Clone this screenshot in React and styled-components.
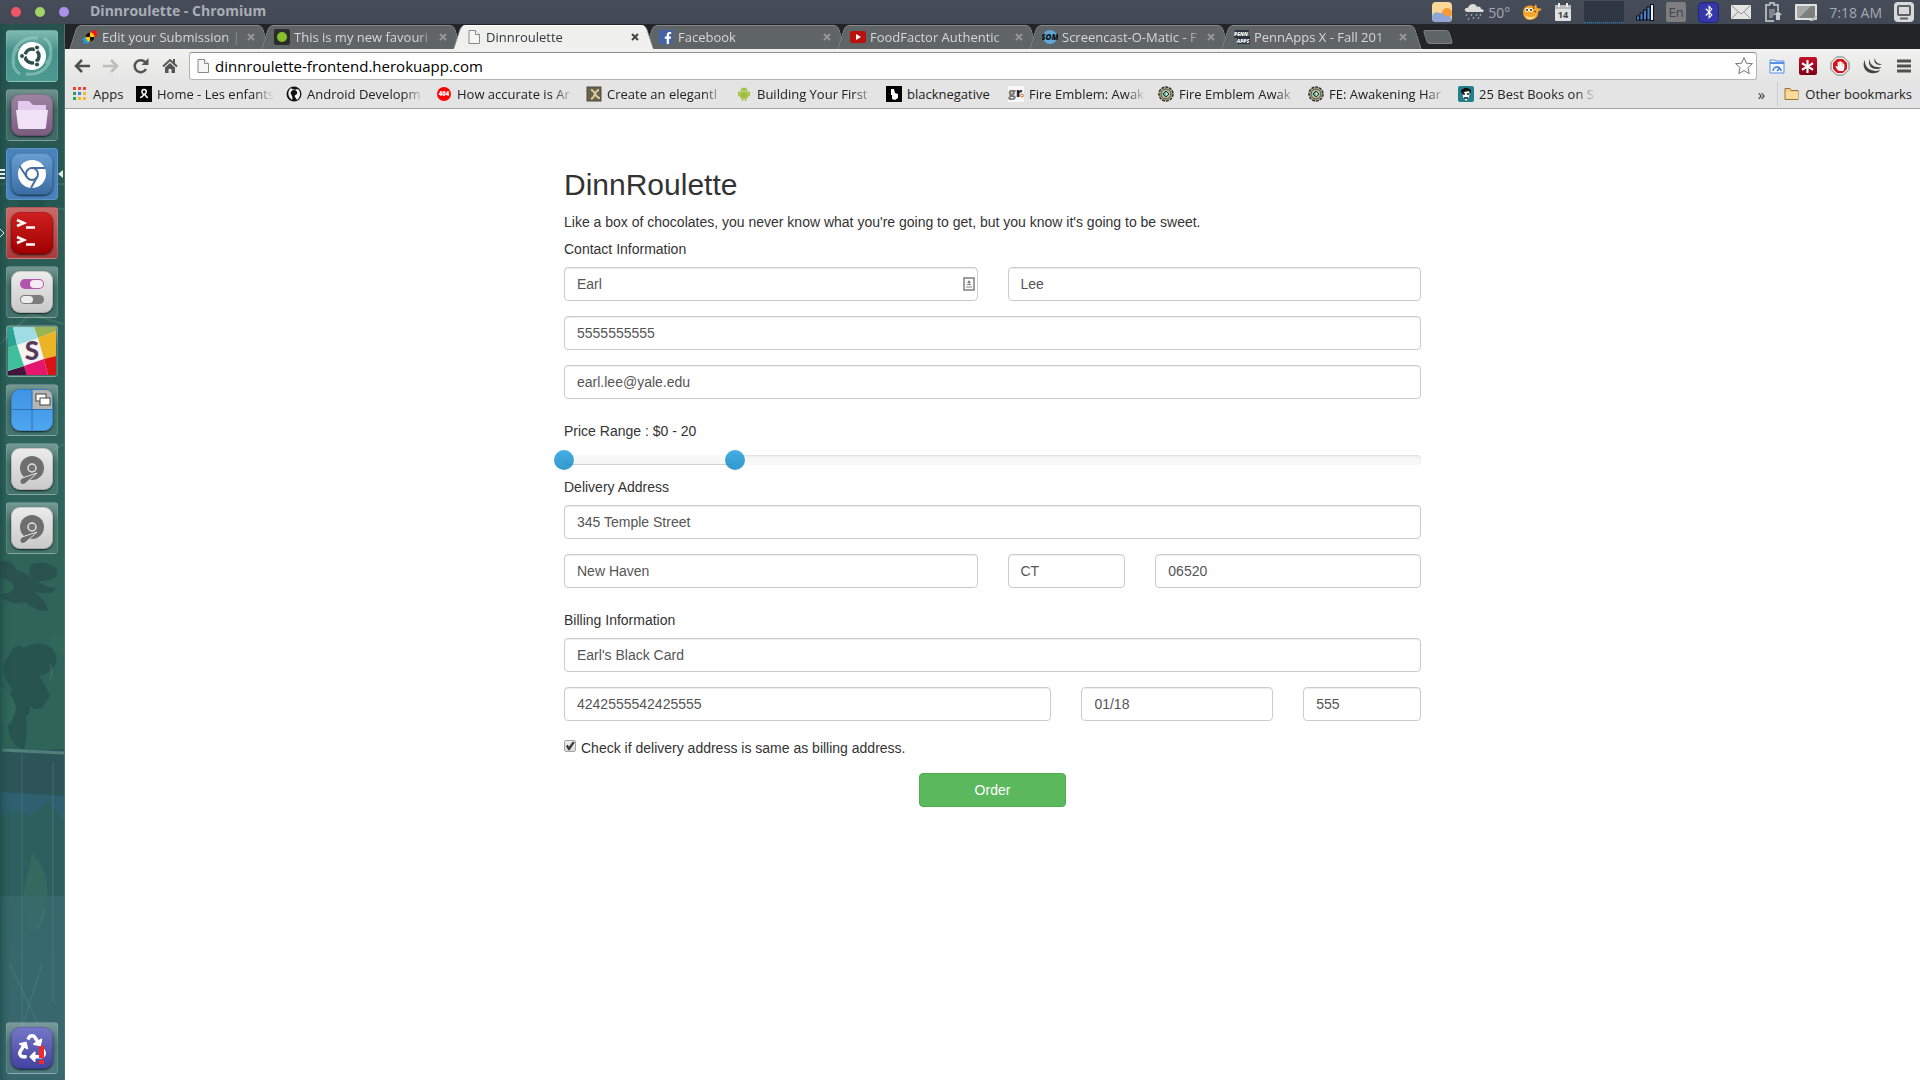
import React, { useState } from 'react';
import styled, { createGlobalStyle, css } from 'styled-components';
import { AiFillAndroid } from 'react-icons/ai';
import { FaAsterisk, FaBluetoothB, FaFacebookF, FaHandPaper, FaRecycle } from 'react-icons/fa';

const uiFont = '"Open Sans", "Noto Sans", sans-serif';
const pageFont = '"Liberation Sans", Arial, sans-serif';

/* ---------- favicons ---------- */

const PageIcon = () => (
  <svg width="16" height="16" viewBox="0 0 16 16">
    <path d="M3 1.5h6.5l4 4v9H3z" fill="#f6f6f6" stroke="#8a8a8a" />
    <path d="M9.5 1.5v4h4" fill="#fff" stroke="#8a8a8a" />
  </svg>
);

const PinwheelIcon = () => (
  <svg width="16" height="16" viewBox="0 0 16 16">
    <path d="M8 5l2-4 2 1 3-1-1 3 2 2-4 2z" fill="#f01414" />
    <path d="M8 11l-2 4-2-1-3 1 1-3-2-2 4-2z" fill="#1c9be0" />
    <circle cx="8" cy="8" r="4.5" fill="#ffc60a" />
    <path d="M8 8V3.5A4.5 4.5 0 0 0 3.5 8zM8 8v4.5A4.5 4.5 0 0 0 12.500 8z" fill="#111" />
  </svg>
);

const GreenDotIcon = () => (
  <svg width="16" height="16" viewBox="0 0 16 16">
    <rect width="16" height="16" rx="2" fill="#2b2d2b" />
    <circle cx="8" cy="8" r="5" fill="#86bf2e" />
  </svg>
);

const FacebookBox = styled.span`
  display: flex;
  align-items: flex-end;
  justify-content: center;
  width: 14px;
  height: 14px;
  margin: 0 1px;
  padding-left: 3px;
  background: #4561a8;
  color: #fff;
`;

const FacebookIcon = () => <FacebookBox><FaFacebookF size={12} /></FacebookBox>;

const YoutubeIcon = () => (
  <svg width="16" height="16" viewBox="0 0 16 16">
    <rect y="2" width="16" height="12" rx="2" fill="#b9110c" />
    <path d="M6 5l5 3-5 3z" fill="#fff" />
  </svg>
);

const SomIcon = () => (
  <svg width="16" height="16" viewBox="0 0 16 16">
    <circle cx="8" cy="8" r="7" fill="#5fa5d6" />
    <text x="8" y="11" textAnchor="middle" fontFamily="Open Sans" fontStyle="italic" fontWeight="800" fontSize="8" fill="#111">SOM</text>
  </svg>
);

const PennIcon = () => (
  <svg width="16" height="16" viewBox="0 0 16 16">
    <path d="M1 1h14l-1 6h2v8H3V9H0z" fill="#2e3440" />
    <text x="7" y="7" textAnchor="middle" fontFamily="Open Sans" fontStyle="italic" fontWeight="800" fontSize="5" fill="#fff">PENN</text>
    <text x="9" y="14" textAnchor="middle" fontFamily="Open Sans" fontStyle="italic" fontWeight="800" fontSize="5" fill="#fff">APPS</text>
  </svg>
);

const AppsIcon = () => (
  <svg width="15" height="14" viewBox="0 0 15 14">
    {['#e8453c', '#e8453c', '#e8453c', '#2f9e58', '#3c7fe8', '#f5b720', '#2f9e58', '#f5b720', '#f5b720'].map((c, i) => (
      <rect key={i} x={(i % 3) * 5} y={Math.floor(i / 3) * 5} width="3" height="3" fill={c} />
    ))}
  </svg>
);

const EnfantsIcon = () => (
  <svg width="16" height="16" viewBox="0 0 16 16">
    <rect width="16" height="16" fill="#000" />
    <path d="M4 11.5c3 0 3-2 4-3C5.500 8 5 3.5 8 3.5s3 4 0 5c2 0 2 3 4 3" fill="none" stroke="#fff" strokeWidth="1.5" />
  </svg>
);

const GithubIcon = () => (
  <svg width="16" height="16" viewBox="0 0 16 16">
    <circle cx="8" cy="8" r="7.5" fill="#111" />
    <path d="M5 2C2 4 1.5 9 4 12l2 2c1-2 0-4-1-6s1-4 3-4 4 2 3 4c-1 1-3 1-2 3l2 3c4-3 4-8 1-11-1 1-6 1-7-1z" fill="#f4f4f4" />
  </svg>
);

const NotFoundIcon = () => (
  <svg width="16" height="16" viewBox="0 0 16 16">
    <circle cx="8" cy="8" r="7" fill="#f00" />
    <text x="8" y="10" textAnchor="middle" fontFamily="Open Sans" fontWeight="800" fontSize="6" fill="#fff">404</text>
  </svg>
);

const XIcon = () => (
  <svg width="16" height="16" viewBox="0 0 16 16">
    <rect x="1" y="1" width="14" height="14" fill="#67624f" stroke="#4f4b3c" />
    <path d="M5 4c4 0 4 8 9 8M13 4c-4 0-4 8-8 9" fill="none" stroke="#dccb94" strokeWidth="2" />
  </svg>
);

const BlackIcon = () => (
  <svg width="16" height="16" viewBox="0 0 16 16">
    <rect width="16" height="16" fill="#000" />
    <path d="M5 3h3l1 4 3 1v4l-3 2-3-1V9H5z" fill="#fff" />
  </svg>
);

const GrIcon = () => (
  <svg width="16" height="16" viewBox="0 0 16 16">
    <rect width="16" height="16" fill="#f7f7f7" />
    <text x="0" y="11" fontFamily="Open Sans" fontWeight="800" fontSize="13" fill="#777">g</text>
    <text x="8" y="11" fontFamily="Open Sans" fontWeight="800" fontSize="13" fill="#222">r</text>
    <circle cx="14" cy="9.5" r="1.5" fill="none" stroke="#f26522" />
  </svg>
);

const EmblemIcon = () => (
  <svg width="16" height="16" viewBox="0 0 16 16">
    <circle cx="8" cy="8" r="7" fill="#b9b79a" stroke="#2d3129" strokeWidth="1.5" strokeDasharray="3 1" />
    <circle cx="8" cy="8" r="5" fill="none" stroke="#45493d" />
    <path d="M8 5l3 3-3 3-3-3z" fill="#4fb8a4" stroke="#2d3129" />
    <path d="M8 6l2 2-2 2z" fill="#d6f3ea" />
  </svg>
);

const BookIcon = () => (
  <svg width="16" height="16" viewBox="0 0 16 16">
    <rect width="16" height="16" rx="2" fill="#21808c" />
    <path d="M4 4c2-3 7-3 8 0l-1 7-3 4-3-4z" fill="#fff" />
    <path d="M3 6c0-5 9-6 10-1l-1 3-1-3-5 1-1 3z" fill="#111" />
    <path d="M5 8h2M9 8h2M6 12h4" stroke="#111" strokeWidth="1.5" />
  </svg>
);

const FolderIcon = () => (
  <svg width="16" height="16" viewBox="0 0 16 16">
    <path d="M1 13.500v-11h5l1 2h7v9z" fill="#f4cf8a" stroke="#9b7430" />
    <path d="M2 6h12v7H2z" fill="#fbdc9e" />
  </svg>
);

/* ---------- top panel icons ---------- */

const WeatherIcon = () => (
  <svg width="20" height="20" viewBox="0 0 20 20">
    <rect width="20" height="20" rx="4" fill="#f9d89a" />
    <circle cx="15" cy="11" r="5" fill="#f59a35" />
    <path d="M0 15c0-4 4-6 7-4 4-1 6 2 6 3 4-1 6 1 7 3-1 2-2 3-4 3H4c-2 0-4-1-4-5z" fill="#8fa6d6" />
  </svg>
);

const RainIcon = () => (
  <svg width="20" height="18" viewBox="0 0 20 18">
    <path d="M3 9C-1 8 1 4 4 5c1-5 8-5 9-1 2-1 4 0 4 2 4 0 3 4 0 3z" fill="#dcdcd8" />
    <path d="M3 11l-1 2M8 11l-1 2M13 11l-1 2M17 11l-1 2M5 15l-1 2M10 14l-1 2M15 14l-1 2" stroke="#b4bcc6" />
  </svg>
);

const FishIcon = () => (
  <svg width="20" height="18" viewBox="0 0 20 18">
    <path d="M1 9C1 3 8 1 12 4l2-3 1 4 5 1-4 3c1 5-4 8-8 8s-7-3-7-8z" fill="#f3a52c" />
    <path d="M3 12c3 3 8 3 11 0-2 5-9 6-11 0z" fill="#ffe29a" />
    <circle cx="5" cy="7" r="2" fill="#fff" />
    <circle cx="9" cy="7" r="2" fill="#fff" />
    <circle cx="5" cy="7" r="1" fill="#222" />
    <circle cx="9" cy="7" r="1" fill="#222" />
    <path d="M12 8l2 1M11 4l1 2" stroke="#6d3c08" />
  </svg>
);

const CalendarIcon = () => (
  <svg width="18" height="18" viewBox="1 0 18 18">
    <rect x="2" y="2" width="16" height="16" rx="1" fill="#dfdfdf" />
    <rect x="2" y="2" width="16" height="4" fill="#b9b9b9" />
    <path d="M6 0v4M14 0v4" stroke="#eee" strokeWidth="2" />
    <text x="10" y="15" textAnchor="middle" fontFamily="Open Sans" fontWeight="700" fontSize="9" fill="#3c414b">14</text>
  </svg>
);

const GraphBox = styled.div`
  width: 40px;
  height: 22px;
  background: #2f3742;
  border-bottom: 1px dotted #2089d6;
`;

const SignalIcon = () => (
  <svg width="18" height="17" viewBox="0 0 18 17">
    {[0, 1, 2, 3].map((n) => (
      <rect key={n} x={n * 3.5 + 0.5} y={12 - n * 3} width="3" height={4 + n * 3} fill="#4a7fd0" stroke="#0d1117" />
    ))}
    <rect x="14.5" y="0.5" width="3" height="16" fill="#f2f2f2" stroke="#0d1117" />
  </svg>
);

const LanguageBox = styled.span`
  width: 20px;
  height: 20px;
  border-radius: 2px;
  background: #7e7e7e;
  color: #40454f;
  font-size: 13px;
  line-height: 20px;
  text-align: center;
`;

const BluetoothBox = styled.span`
  display: flex;
  align-items: center;
  justify-content: center;
  width: 21px;
  height: 21px;
  border-radius: 5px;
  background: #3438a8;
  box-shadow: inset 0 0 0 1px #22257c;
  color: #fff;
`;

const MailIcon = () => (
  <svg width="20" height="14" viewBox="0 0 20 14">
    <rect width="20" height="14" rx="1" fill="#e4e4e2" />
    <path d="M1 1l9 8 9-8M1 13l6-6M19 13l-6-6" fill="none" stroke="#8f8f8d" />
  </svg>
);

const BatteryIcon = () => (
  <svg width="20" height="20" viewBox="0 0 20 20">
    <path d="M7 3V1h4v2h4v6M11 19H3V3h4" fill="none" stroke="#aeb1b6" strokeWidth="2" />
    <path d="M6 7h6v5l-3 4H6z" fill="#7f848d" />
    <path d="M11 13l4-4 4 4h-2v5h-4v-5z" fill="#c9cbce" />
  </svg>
);

const ScreenIcon = () => (
  <svg width="22" height="17" viewBox="0 0 22 17">
    <rect width="22" height="16" rx="1" fill="#e2e2de" />
    <rect x="2" y="2" width="18" height="12" fill="#7c7f7b" />
    <path d="M2 2h14L4 14H2z" fill="#a5a8a4" />
    <path d="M14 17l8-6v2l-4 4z" fill="#b9bcae" />
  </svg>
);

const SessionIcon = () => (
  <svg width="20" height="20" viewBox="0 0 20 20">
    <rect width="20" height="20" rx="4" fill="#d9d9d9" />
    <rect x="4" y="4" width="12" height="9" rx="1" fill="none" stroke="#5c5f63" strokeWidth="2" />
    <path d="M6 16.500h8" stroke="#5c5f63" strokeWidth="2" />
  </svg>
);

/* ---------- toolbar icons ---------- */

const ArrowIcon = ({ forward }) => (
  <svg width="16" height="14" viewBox="0 0 16 14">
    <path
      d={forward ? 'M0 7h13M8 1l6 6-6 6' : 'M16 7H3M8 1L2 7l6 6'}
      fill="none"
      stroke={forward ? '#bdbdbd' : '#505050'}
      strokeWidth="2.5"
    />
  </svg>
);

const ReloadIcon = () => (
  <svg width="16" height="16" viewBox="0 0 16 16">
    <path d="M13 11a6 6 0 1 1-.5-6.500" fill="none" stroke="#555" strokeWidth="2.5" />
    <path d="M15.500 0v7h-7z" fill="#555" />
  </svg>
);

const HomeIcon = () => (
  <svg width="16" height="16" viewBox="0 0 16 16">
    <path d="M1 8.500L8 2l7 6.500" fill="none" stroke="#555" strokeWidth="2" />
    <path d="M8 5l5 4.500V15H9.500v-4h-3v4H3V9.500z" fill="#555" />
    <path d="M11 1h2v4h-2z" fill="#555" />
  </svg>
);

const StarIcon = () => (
  <svg width="20" height="20" viewBox="0 0 20 20">
    <path d="M10 1.500l2.400 5.700 6.100.5-4.600 4 1.400 6-5.300-3.200-5.300 3.200 1.400-6-4.600-4 6.100-.5z" fill="#fff" stroke="#777" />
  </svg>
);

const SpeedIcon = () => (
  <svg width="16" height="16" viewBox="0 0 16 16">
    <path d="M1 2h5l1 1h8v12H1z" fill="#f4f8ff" stroke="#5a8fe6" />
    <path d="M1 5h14" stroke="#5a8fe6" strokeWidth="2" />
    <path d="M4 13a4 4 0 0 1 8 0M8 13l3-3" fill="none" stroke="#3d78d8" strokeWidth="1.5" />
  </svg>
);

const LastPassBox = styled.span`
  display: flex;
  align-items: center;
  justify-content: center;
  width: 18px;
  height: 18px;
  border-radius: 2px;
  background: linear-gradient(#c5102c, #7e0014);
  color: #fff;
`;

const StopSign = styled.span`
  display: grid;
  place-items: center;
  color: #fff;

  > * {
    grid-area: 1 / 1;
  }
`;

const StopIcon = () => (
  <StopSign>
    <svg width="20" height="20" viewBox="0 0 20 20">
      <path d="M6.500 1h7L19 6.500v7L13.500 19h-7L1 13.500v-7z" fill="#f4f4f4" stroke="#777" />
      <path d="M7 3h6l4 4v6l-4 4H7l-4-4V7z" fill="#d8121a" />
    </svg>
    <FaHandPaper size={10} />
  </StopSign>
);

const SwooshIcon = () => (
  <svg width="20" height="18" viewBox="0 0 20 18">
    <path d="M3 3C-1 9 4 18 13 16c2 0 4-1 5-3C10 16 2 11 3 3z" fill="#444" />
    <path d="M8 2c-3 5 1 11 8 10 1 0 3-1 3-2-6 1-12-2-11-8z" fill="#444" />
    <path d="M13 1c-2 4 1 7 5 7l2-1c-4 0-7-2-7-6z" fill="#444" />
  </svg>
);

const MenuIcon = () => (
  <svg width="14" height="14" viewBox="0 0 14 14">
    <path d="M0 2h14M0 7h14M0 12h14" stroke="#505050" strokeWidth="3" />
  </svg>
);

/* ---------- launcher icons ---------- */

const UbuntuIcon = () => (
  <svg width="50" height="50" viewBox="1 1 50 50">
    <path d="M8 34C4 18 16 6 32 8M44 18c4 16-8 28-24 26M14 44C4 38 6 24 12 18M38 8c10 6 8 20 2 26" fill="none" stroke="#a9d6cf" strokeWidth="3" opacity=".5" />
    <circle cx="26" cy="26" r="14" fill="#fff" />
    <circle cx="26" cy="26" r="7" fill="none" stroke="#2f4f4e" strokeWidth="3.5" strokeDasharray="12.700 2" strokeDashoffset="6" />
    <circle cx="16" cy="26" r="2.5" fill="#2f4f4e" stroke="#fff" />
    <circle cx="31" cy="17.5" r="2.5" fill="#2f4f4e" stroke="#fff" />
    <circle cx="31" cy="34.5" r="2.5" fill="#2f4f4e" stroke="#fff" />
  </svg>
);

const FilesIcon = () => (
  <svg width="42" height="42" viewBox="0 0 42 42">
    <path d="M7 7h11l4 4h13v10H7z" fill="#e4c9ee" />
    <path d="M5 16h32l-2 17q0 2-2 2H9q-2 0-2-2z" fill="#f1e1f7" />
  </svg>
);

const ChromiumIcon = () => (
  <svg width="42" height="42" viewBox="0 0 42 42">
    <circle cx="21" cy="21" r="14" fill="#fff" />
    <circle cx="21" cy="21" r="6" fill="#fff" stroke="#466f9f" strokeWidth="2" />
    <path d="M21 15h13M15.800 24L8.500 13M26 24l-6 11" stroke="#466f9f" strokeWidth="2" />
  </svg>
);

const TerminalIcon = () => (
  <svg width="42" height="42" viewBox="0 0 42 42">
    <path d="M6 8l7 3-7 3M6 25l7 3-7 3" fill="none" stroke="#fff" strokeWidth="2.5" />
    <path d="M15 15.500h9M15 32.500h9" stroke="#fff" strokeWidth="2.5" />
  </svg>
);

const TogglesIcon = () => (
  <svg width="42" height="42" viewBox="0 0 42 42">
    <rect x="9" y="8" width="24" height="10" rx="5" fill="#b355ae" />
    <rect x="19" y="9" width="13" height="8" rx="4" fill="#f6ecf6" />
    <rect x="9" y="24" width="24" height="9" rx="4.5" fill="#7c7c7c" />
    <rect x="10" y="25" width="12" height="7" rx="3.5" fill="#ececec" />
  </svg>
);

const SlackIcon = () => (
  <svg width="48" height="48" viewBox="0 0 48 48">
    <path d="M0 0h48v48H0z" fill="#f6f2f4" />
    <path d="M0 0h5l4 18-9 3z" fill="#2aa591" />
    <path d="M5 0h21l4 11L9 18z" fill="#9fdce4" />
    <path d="M26 0h22v4l-18 7z" fill="#98b453" />
    <path d="M30 11l18-7v25l-12 3z" fill="#ecb424" />
    <path d="M36 32l12-3v19h-8z" fill="#d81414" />
    <path d="M36 32l-20 7 3 9h21z" fill="#e6166e" />
    <path d="M16 39L0 44v4h19z" fill="#44143f" />
    <path d="M9 18l7 21-16 5V21z" fill="#3fc09b" />
    <text x="24" y="33" textAnchor="middle" fontFamily="Lato" fontWeight="900" fontSize="26" fill="#573a56">S</text>
  </svg>
);

const WorkspaceIcon = () => (
  <svg width="42" height="42" viewBox="0 0 42 42">
    <path d="M21 1h14q6 0 6 6v14H21z" fill="#b5b5b5" />
    <path d="M21 1v40M1 20.500h40" stroke="#2b6fb8" />
    <rect x="25" y="5" width="10" height="7" fill="#fff" stroke="#444" />
    <rect x="29" y="9" width="10" height="7" fill="#fff" stroke="#444" />
  </svg>
);

const DiskIcon = () => (
  <svg width="42" height="42" viewBox="0 0 42 42">
    <circle cx="21" cy="20" r="12" fill="#6e6e6e" />
    <circle cx="21" cy="20" r="4" fill="#747474" stroke="#e2e2e2" strokeWidth="1.5" />
    <path d="M26 25L14 36q-3 2-5-1-1-3 2-5z" fill="#6e6e6e" stroke="#e2e2e2" />
  </svg>
);

const BangIcon = () => (
  <svg width="5" height="18" viewBox="0 0 5 18">
    <path d="M0 0h5v12H0zM0 14h5v4H0z" fill="#f02a2a" />
  </svg>
);

const Wallpaper = () => (
  <svg width="64" height="1056" viewBox="0 0 64 1056" preserveAspectRatio="none">
    <rect y="500" width="64" height="230" fill="#2f6459" />
    <path d="M0 130q20-20 64-5v60q-30 20-64 0z" fill="#265852" />
    <path d="M20 150h20l6 40H18z" fill="#22524b" />
    <path d="M0 160h64M4 185h60M0 320l30-30 34 10M30 440l34-20" fill="none" stroke="#4f8a7e" strokeWidth="2" opacity=".4" />
    <path d="M0 538q12-4 16 8 10 2 16 10-6-8 0-16 14-4 24 4 4 10-8 12-8 2-12 0 10 8 20 8-2 8-22 4 12 8 14 18-6 4-24-8-10 4-18-2-6-2-6-6 14 0 14-8-6-8-14-8z" fill="#2a524e" />
    <path d="M12 626q6-8 12-2 16-10 30 2 6 14-4 20-8 8-12 4 6 8 12 22l-8 12q-12 4-12-6 2 12-4 14 2 18-2 34-14-4-16-24 8-8 6-22-6-8-2-16-10-10-8-24z" fill="#28544f" />
    <path d="M50 616q6-6 14-2v18l-10-4zM0 664q14 6 16 20-2 16-16 18z" fill="#30685a" />
    <path d="M0 728l64-3v50H0z" fill="#2d5559" />
    <path d="M2 726l62 3" stroke="#6d9c93" strokeWidth="3" opacity=".6" />
    <path d="M0 768l64 4v100H0z" fill="#2f6070" />
    <path d="M0 792q20-8 30 0l18-14 16 18v76H0z" fill="#2d5f5e" />
    <path d="M32 830q20 20 14 50-8 30-18 28-8-30-2-50z" fill="#35695f" />
    <path d="M0 872h64v184H0z" fill="#3a6c73" opacity=".5" />
    <path d="M22 730v290M53 738v240M10 940l28 60M42 940L20 1010M44 885q-2 16-8 20M50 640q4 8 0 16" fill="none" stroke="#5d938b" opacity=".4" />
  </svg>
);

/* ---------- layout ---------- */

const GlobalStyle = createGlobalStyle`
  * {
    box-sizing: border-box;
  }
  body {
    margin: 0;
    background: #fff;
  }
  svg {
    display: block;
    flex-shrink: 0;
  }
`;

const Desktop = styled.div`
  display: flex;
  flex-direction: column;
  min-height: 100vh;
  font-family: ${uiFont};
`;

const TopPanel = styled.header`
  display: flex;
  align-items: center;
  height: 24px;
  padding: 0 6px 0 11px;
  background: linear-gradient(#474d58, #434954);
`;

const WindowButton = styled.button`
  width: 10px;
  height: 10px;
  margin-right: 14px;
  padding: 0;
  border: none;
  border-radius: 50%;
  background: ${({ $color }) => $color};
`;

const WindowTitle = styled.span`
  margin-left: 7px;
  color: #a9afb9;
  font-size: 14px;
  font-weight: 700;
  line-height: 22px;
  height: 24px;
`;

const Indicators = styled.div`
  display: flex;
  align-items: center;
  gap: 12px;
  margin-left: auto;
  color: #a2a9b4;
  font-size: 14px;
`;

const Temperature = styled.span`
  display: flex;
  align-items: center;
  gap: 4px;
`;

const Workspace = styled.div`
  display: flex;
  flex: 1;
`;

const Launcher = styled.nav`
  position: relative;
  display: flex;
  flex-direction: column;
  align-items: center;
  gap: 7px;
  width: 65px;
  padding: 6px 0;
  border-right: 1px solid #5a6b6c;
  background: linear-gradient(#28544f, #2d645c 40%, #2d6159 70%, #38666a);
`;

const WallpaperLayer = styled.div`
  position: absolute;
  inset: 0;
  overflow: hidden;

  svg {
    width: 100%;
    height: 100%;
  }

  &:after {
    content: "";
    position: absolute;
    inset: 0;
    box-shadow: inset 6px 0 8px -5px #1c4743;
  }
`;

const Tile = styled.button`
  position: relative;
  display: flex;
  align-items: center;
  justify-content: center;
  width: 52px;
  height: 52px;
  padding: 0;
  border: 1px solid rgba(255, 255, 255, 0.14);
  border-radius: 4px;
  background: ${({ $color }) => $color || 'linear-gradient(rgba(190, 205, 202, 0.5), rgba(160, 185, 180, 0.18) 40%, rgba(160, 185, 180, 0.2))'};

  &:last-child {
    margin-top: auto;
  }
`;

const TileFace = styled.span`
  position: relative;
  display: flex;
  align-items: center;
  justify-content: center;
  width: 42px;
  height: 42px;
  overflow: hidden;
  border-radius: 9px;
  background: ${({ $face }) => $face};
  box-shadow: 0 1px 2px rgba(0, 0, 0, 0.7), inset 0 0 0 1px rgba(0, 0, 0, 0.15);
  color: #fff;
`;

const Bang = styled.span`
  position: absolute;
  right: 9px;
  bottom: 5px;
`;

const Marker = styled.span`
  position: absolute;
  ${({ $side }) => ($side === 'left' ? 'left: -7px;' : 'right: -6px;')}
`;

const Browser = styled.section`
  display: flex;
  flex: 1;
  flex-direction: column;
  min-width: 0;
  background: #fff;
`;

const TabStrip = styled.div`
  display: flex;
  height: 25px;
  padding: 1px 8px 0 4px;
  background: #212527;
`;

const tabHalf = css`
  content: "";
  position: absolute;
  top: 0;
  bottom: 0;
  z-index: -1;
  border-top: 1px solid ${({ $active }) => ($active ? '#fff' : '#85898c')};
  background: ${({ $active }) => ($active ? '#f0f0ee' : '#5f6467')};
`;

const Tab = styled.div`
  position: relative;
  z-index: ${({ $active }) => ($active ? 2 : 1)};
  display: flex;
  align-items: center;
  flex: 0 1 201px;
  min-width: 0;
  height: 24px;
  margin-right: -9px;
  padding: 0 15px 0 13px;
  color: ${({ $active }) => ($active ? '#33383c' : '#d5d7d8')};

  &:before {
    ${tabHalf}
    left: 4px;
    width: 50%;
    border-left: 1px solid #85898c;
    border-radius: 5px 0 0 0;
    transform: skewX(-18deg);
  }

  &:after {
    ${tabHalf}
    right: 4px;
    width: 52%;
    border-right: 1px solid #85898c;
    border-radius: 0 5px 0 0;
    transform: skewX(18deg);
  }
`;

const TabTitle = styled.span`
  flex: 1;
  overflow: hidden;
  margin: 0 5px 0 4px;
  font-size: 13px;
  line-height: 20px;
  white-space: nowrap;
  mask-image: linear-gradient(to right, #000 calc(100% - 16px), transparent);
`;

const TabClose = styled.button`
  padding: 0;
  border: none;
  background: none;
  color: ${({ $active }) => ($active ? '#444' : '#929698')};
`;

const NewTab = styled.button`
  width: 26px;
  height: 14px;
  margin: 5px 0 0 12px;
  padding: 0;
  border: 1px solid #7c8083;
  border-radius: 3px;
  background: #5f6467;
  transform: skewX(18deg);
`;

const Toolbar = styled.div`
  display: flex;
  align-items: center;
  height: 32px;
  padding: 3px 0 1px 9px;
  background: linear-gradient(#f1f1ef, #e5e5e5);
`;

const ToolButton = styled.button`
  display: flex;
  align-items: center;
  justify-content: center;
  width: ${({ $width }) => $width}px;
  padding: 0;
  border: none;
  background: none;
`;

const NavButtons = styled.div`
  display: flex;
  gap: 13px;
  margin-right: 11px;
`;

const AddressBar = styled.div`
  display: flex;
  flex: 1;
  align-items: center;
  gap: 4px;
  height: 28px;
  margin-right: 4px;
  padding: 0 2px 0 5px;
  border: 1px solid #b4b4b4;
  border-top-color: #8f8f8f;
  border-radius: 3px;
  background: #fff;
`;

const AddressInput = styled.input`
  flex: 1;
  min-width: 0;
  height: 22px;
  padding: 0;
  border: none;
  outline: none;
  color: #000;
  font-family: ${uiFont};
  font-size: 15px;
`;

const BookmarkBar = styled.div`
  display: flex;
  align-items: center;
  gap: 12px;
  height: 28px;
  padding: 0 8px 2px;
  border-bottom: 1px solid #a5a5a5;
  background: #e4e4e4;
`;

const Bookmark = styled.a`
  display: flex;
  align-items: center;
  gap: 5px;
  color: #222;
  font-size: 13px;
  line-height: 18px;
  text-decoration: none;
  white-space: nowrap;
`;

const BookmarkTitle = styled.span`
  width: ${({ $width }) => $width || 117}px;
  ${({ $width }) => !$width && css`
    overflow: hidden;
    mask-image: linear-gradient(to right, #000 calc(100% - 20px), transparent);
  `}
`;

const Overflow = styled.button`
  margin-left: auto;
  padding: 0;
  border: none;
  background: none;
  color: #333;
  font-family: ${uiFont};
  font-size: 15px;
  line-height: 18px;
`;

const Divider = styled.span`
  width: 1px;
  height: 24px;
  margin-right: -6px;
  background: #c5ccd4;
`;

const Page = styled.main`
  flex: 1;
  width: 100%;
  max-width: 857px;
  margin: 0 auto;
  padding-top: 59px;
  color: #333;
  font-family: ${pageFont};
  font-size: 14px;
  line-height: 20px;
`;

const Heading = styled.h2`
  margin: 0 0 11px;
  font-size: 30px;
  font-weight: 500;
  line-height: 33px;
`;

const Tagline = styled.p`
  margin: 0 0 7px;
`;

const Section = styled.fieldset`
  min-width: 0;
  margin: 0 0 22px;
  padding: 0;
  border: none;
`;

const Legend = styled.legend`
  margin-bottom: 8px;
  padding: 0;
`;

const Fields = styled.div`
  display: grid;
  grid-template-columns: repeat(12, minmax(0, 1fr));
  gap: 15px 30px;
`;

const Field = styled.div`
  position: relative;
  grid-column: span ${({ $span }) => $span};
`;

const TextInput = styled.input`
  display: block;
  width: 100%;
  height: 34px;
  padding: 6px 12px;
  border: 1px solid #ccc;
  border-radius: 4px;
  box-shadow: inset 0 1px 1px rgba(0, 0, 0, 0.075);
  color: #555;
  font-family: ${pageFont};
  font-size: 14px;
  line-height: 20px;
`;

const FillBadge = styled.span`
  position: absolute;
  top: 10px;
  right: 3px;
`;

const PriceRange = styled.div`
  margin-bottom: 7px;
`;

const Slider = styled.div`
  display: grid;
  align-items: center;
  height: 20px;
  margin-top: 9px;

  > * {
    grid-area: 1 / 1;
  }
`;

const Track = styled.div`
  height: 10px;
  border-radius: 4px;
  background: linear-gradient(#f5f5f5, #f9f9f9);
  box-shadow: inset 0 1px 2px rgba(0, 0, 0, 0.1);
`;

const Selection = styled.div`
  height: 10px;
  border-radius: 4px;
  background: linear-gradient(#f9f9f9, #f5f5f5);
  box-shadow: inset 0 -1px 0 rgba(0, 0, 0, 0.15);
`;

const Range = styled.input`
  width: calc(100% + 20px);
  height: 20px;
  margin: 0 -10px;
  appearance: none;
  background: none;
  pointer-events: none;

  &::-webkit-slider-thumb {
    width: 20px;
    height: 20px;
    appearance: none;
    border: none;
    border-radius: 50%;
    background: linear-gradient(#149bdf, #0480be);
    opacity: 0.8;
    pointer-events: auto;
  }
`;

const CheckRow = styled.label`
  display: flex;
  align-items: center;
  gap: 5px;
  margin-top: -5px;
`;

const Checkbox = styled.input`
  width: 12px;
  height: 12px;
  margin: 0 0 4px;
  appearance: none;
  border: 1px solid #a5a5a5;
  border-radius: 2px;
  background: linear-gradient(#ededed, #dcdcdc);

  &:checked:after {
    content: "";
    display: block;
    width: 10px;
    height: 10px;
    background: #3c3c3c;
    clip-path: polygon(8% 50%, 28% 38%, 40% 58%, 78% 4%, 98% 16%, 46% 92%, 34% 92%);
  }
`;

const OrderButton = styled.button`
  display: block;
  width: 147px;
  height: 34px;
  margin: 15px auto 0;
  border: 1px solid #4cae4c;
  border-radius: 4px;
  background: #5cb85c;
  color: #fff;
  font-family: ${pageFont};
  font-size: 14px;
  line-height: 20px;
`;

/* ---------- data ---------- */

const tabs = [
  { title: 'Edit your Submission |', icon: <PinwheelIcon /> },
  { title: 'This is my new favouri', icon: <GreenDotIcon /> },
  { title: 'Dinnroulette', icon: <PageIcon />, active: true },
  { title: 'Facebook', icon: <FacebookIcon /> },
  { title: 'FoodFactor Authentic', icon: <YoutubeIcon /> },
  { title: 'Screencast-O-Matic - F', icon: <SomIcon /> },
  { title: 'PennApps X - Fall 201', icon: <PennIcon /> },
];

// titles without a width get the default one and fade out at the end
const bookmarks = [
  { title: 'Apps', icon: <AppsIcon />, width: 31 },
  { title: 'Home - Les enfants', icon: <EnfantsIcon /> },
  { title: 'Android Developm', icon: <GithubIcon /> },
  { title: 'How accurate is Ar', icon: <NotFoundIcon /> },
  { title: 'Create an elegantl', icon: <XIcon /> },
  { title: 'Building Your First', icon: <AiFillAndroid size={16} color="#9fc03a" /> },
  { title: 'blacknegative', icon: <BlackIcon />, width: 89 },
  { title: 'Fire Emblem: Awak', icon: <GrIcon /> },
  { title: 'Fire Emblem Awak', icon: <EmblemIcon /> },
  { title: 'FE: Awakening Har', icon: <EmblemIcon /> },
  { title: '25 Best Books on S', icon: <BookIcon /> },
];

const grey = 'linear-gradient(#ececec, #c9c9c9)';

const launcherItems = [
  { name: 'Files', icon: <FilesIcon />, face: 'linear-gradient(#9d86a1, #7b5c80)' },
  { name: 'Chromium', icon: <ChromiumIcon />, face: 'linear-gradient(#6a9fd2, #3a6ca3)', color: '#4883bd', windows: 3 },
  { name: 'Terminal', icon: <TerminalIcon />, face: 'linear-gradient(#cf2020, #a00000)', color: 'linear-gradient(#c96a68, #a83b3b)', windows: 1 },
  { name: 'Tweak Tool', icon: <TogglesIcon />, face: grey },
  { name: 'Slack', icon: <SlackIcon /> },
  { name: 'Workspace Switcher', icon: <WorkspaceIcon />, face: 'linear-gradient(#3f93e6, #4fa5ee)' },
  { name: 'Disk', icon: <DiskIcon />, face: grey },
  { name: 'Disk 2', icon: <DiskIcon />, face: grey },
];

function LauncherTile({ item }) {
  return (
    <Tile aria-label={item.name} $color={item.color}>
      {item.face ? <TileFace $face={item.face}>{item.icon}</TileFace> : item.icon}
      {item.windows === 3 && (
        <>
          <Marker $side="left">
            <svg width="5" height="12" viewBox="0 0 5 12"><path d="M0 2h5M0 6h5M0 10h5" stroke="#e3e8e8" strokeWidth="2" /></svg>
          </Marker>
          <Marker $side="right">
            <svg width="5" height="8" viewBox="0 0 5 8"><path d="M5 0v8L0 4z" fill="#e3e8e8" /></svg>
          </Marker>
        </>
      )}
      {item.windows === 1 && (
        <Marker $side="left">
          <svg width="5" height="8" viewBox="0 0 5 8"><path d="M0 0l4 4-4 4" fill="none" stroke="#e3e8e8" /></svg>
        </Marker>
      )}
    </Tile>
  );
}

function Input({ label, value, span = 12, children }) {
  return (
    <Field $span={span}>
      <TextInput type="text" aria-label={label} defaultValue={value} />
      {children}
    </Field>
  );
}

function OrderForm() {
  const [low, setLow] = useState(0);
  const [high, setHigh] = useState(20);

  return (
    <form onSubmit={(e) => e.preventDefault()}>
      <Section>
        <Legend>Contact Information</Legend>
        <Fields>
          <Input label="First name" value="Earl" span={6}>
            <FillBadge>
              <svg width="12" height="14" viewBox="0 0 12 14">
                <rect x="1" y="1" width="10" height="12" fill="#fff" stroke="#808080" strokeWidth="1.5" />
                <circle cx="6" cy="5" r="1.5" fill="#808080" />
                <path d="M4 7.500h4M3 10h6" stroke="#808080" />
              </svg>
            </FillBadge>
          </Input>
          <Input label="Last name" value="Lee" span={6} />
          <Input label="Phone" value="5555555555" />
          <Input label="Email" value="earl.lee@yale.edu" />
        </Fields>
      </Section>

      <PriceRange>
        <label htmlFor="price-high">Price Range : ${low} - {high}</label>
        <Slider>
          <Track />
          <Selection style={{ marginLeft: `${low}%`, width: `${high - low}%` }} />
          <Range type="range" aria-label="Lowest price" value={low} onChange={(e) => setLow(Math.min(+e.target.value, high))} />
          <Range type="range" id="price-high" value={high} onChange={(e) => setHigh(Math.max(+e.target.value, low))} />
        </Slider>
      </PriceRange>

      <Section>
        <Legend>Delivery Address</Legend>
        <Fields>
          <Input label="Street" value="345 Temple Street" />
          <Input label="City" value="New Haven" span={6} />
          <Input label="State" value="CT" span={2} />
          <Input label="Zip code" value="06520" span={4} />
        </Fields>
      </Section>

      <Section>
        <Legend>Billing Information</Legend>
        <Fields>
          <Input label="Name on card" value="Earl's Black Card" />
          <Input label="Card number" value="4242555542425555" span={7} />
          <Input label="Expiration" value="01/18" span={3} />
          <Input label="CVC" value="555" span={2} />
        </Fields>
      </Section>

      <CheckRow>
        <Checkbox type="checkbox" defaultChecked />
        Check if delivery address is same as billing address.
      </CheckRow>
      <OrderButton type="submit">Order</OrderButton>
    </form>
  );
}

function App() {
  return (
    <Desktop>
      <GlobalStyle />
      <TopPanel>
        <WindowButton aria-label="Close" $color="#ee5566" />
        <WindowButton aria-label="Minimize" $color="#a0d468" />
        <WindowButton aria-label="Maximize" $color="#ac92ec" />
        <WindowTitle>Dinnroulette - Chromium</WindowTitle>
        <Indicators>
          <WeatherIcon />
          <Temperature><RainIcon />50°</Temperature>
          <FishIcon />
          <CalendarIcon />
          <GraphBox />
          <SignalIcon />
          <LanguageBox>En</LanguageBox>
          <BluetoothBox><FaBluetoothB size={14} /></BluetoothBox>
          <MailIcon />
          <BatteryIcon />
          <ScreenIcon />
          <span>7:18 AM</span>
          <SessionIcon />
        </Indicators>
      </TopPanel>

      <Workspace>
        <Launcher>
          <WallpaperLayer><Wallpaper /></WallpaperLayer>
          <Tile aria-label="Search" $color="linear-gradient(#7fbab2, #45928a 40%, #4d9a91)"><UbuntuIcon /></Tile>
          {launcherItems.map((item) => <LauncherTile key={item.name} item={item} />)}
          <Tile aria-label="Trash">
            <TileFace $face="linear-gradient(#7676c8, #4242a0)">
              <FaRecycle size={28} />
              <Bang><BangIcon /></Bang>
            </TileFace>
          </Tile>
        </Launcher>

        <Browser>
          <TabStrip>
            {tabs.map((tab) => (
              <Tab key={tab.title} $active={tab.active}>
                {tab.icon}
                <TabTitle>{tab.title}</TabTitle>
                <TabClose aria-label="Close tab" $active={tab.active}>
                  <svg width="8" height="8" viewBox="0 0 8 8">
                    <path d="M1 1l6 6M7 1L1 7" stroke="currentColor" strokeWidth="2" />
                  </svg>
                </TabClose>
              </Tab>
            ))}
            <NewTab aria-label="New tab" />
          </TabStrip>

          <Toolbar>
            <NavButtons>
              <ToolButton aria-label="Back" $width={16}><ArrowIcon /></ToolButton>
              <ToolButton aria-label="Forward" $width={16}><ArrowIcon forward /></ToolButton>
              <ToolButton aria-label="Reload" $width={17}><ReloadIcon /></ToolButton>
              <ToolButton aria-label="Home" $width={16}><HomeIcon /></ToolButton>
            </NavButtons>
            <AddressBar>
              <PageIcon />
              <AddressInput type="text" aria-label="Address" defaultValue="dinnroulette-frontend.herokuapp.com" />
              <StarIcon />
            </AddressBar>
            <ToolButton aria-label="PageSpeed" $width={31}><SpeedIcon /></ToolButton>
            <ToolButton aria-label="LastPass" $width={31}><LastPassBox><FaAsterisk size={13} /></LastPassBox></ToolButton>
            <ToolButton aria-label="Blocker" $width={33}><StopIcon /></ToolButton>
            <ToolButton aria-label="Swoosh" $width={31}><SwooshIcon /></ToolButton>
            <ToolButton aria-label="Menu" $width={33}><MenuIcon /></ToolButton>
          </Toolbar>

          <BookmarkBar>
            {bookmarks.map((b) => (
              <Bookmark key={b.title} href="#">
                {b.icon}
                <BookmarkTitle $width={b.width}>{b.title}</BookmarkTitle>
              </Bookmark>
            ))}
            <Overflow aria-label="More bookmarks">»</Overflow>
            <Divider />
            <Bookmark href="#">
              <FolderIcon />
              Other bookmarks
            </Bookmark>
          </BookmarkBar>

          <Page>
            <Heading>DinnRoulette</Heading>
            <Tagline>Like a box of chocolates, you never know what you're going to get, but you know it's going to be sweet.</Tagline>
            <OrderForm />
          </Page>
        </Browser>
      </Workspace>
    </Desktop>
  );
}

export default App;
